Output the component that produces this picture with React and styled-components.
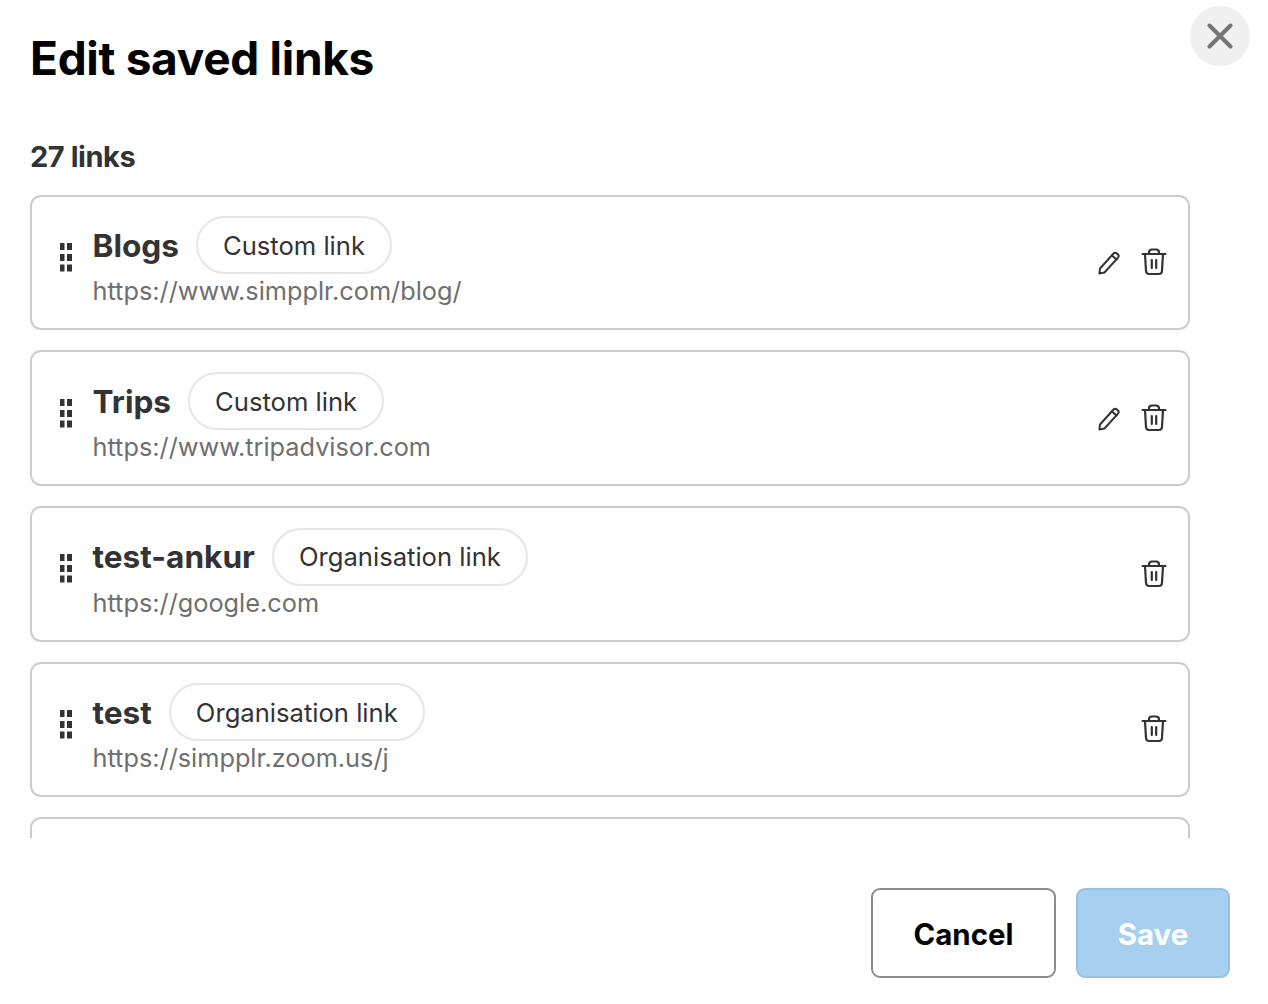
import React from "react";
import styled, { createGlobalStyle } from "styled-components";

const Global = createGlobalStyle`
  html, body { margin: 0; padding: 0; background: #fff; }
  * { box-sizing: border-box; }
  body { font-family: Inter, "Liberation Sans", sans-serif; }
`;

const Dialog = styled.div`
  position: relative;
  width: 1268px;
  height: 1004px;
  padding: 0 38px 0 30px;
  display: flex;
  flex-direction: column;
  overflow: hidden;
`;
const Title = styled.h1`
  margin: 28px 0 0;
  font-size: 46px;
  line-height: 60px;
  font-weight: 700;
  letter-spacing: -0.3px;
  color: #000;
`;
const CloseButton = styled.button`
  position: absolute;
  top: 6px;
  right: 18px;
  width: 60px;
  height: 60px;
  padding: 0;
  border: 0;
  border-radius: 50%;
  background: #f0f0f0;
  display: flex;
  align-items: center;
  justify-content: center;
`;
const Count = styled.div`
  margin-top: 47px;
  font-size: 29px;
  line-height: 44px;
  font-weight: 700;
  letter-spacing: -0.45px;
  color: #333;
`;
const List = styled.div`
  margin-top: 15.5px;
  height: 643.5px;
  width: 1160px;
  overflow: hidden;
  display: flex;
  flex-direction: column;
  gap: 20px;
`;
const Card = styled.div`
  flex: none;
  height: 135.7px;
  border: 2px solid #ccc;
  border-radius: 11px;
  background: #fff;
  padding: 0 21px 0 28px;
  display: flex;
  align-items: center;
`;
const Handle = styled.svg`
  flex: none;
  width: 12px;
  height: 29px;
  margin: 0 20.5px 10px 0;
`;
const Body = styled.div`
  flex: 1;
  min-width: 0;
  display: flex;
  flex-direction: column;
`;
const TitleRow = styled.div`
  display: flex;
  align-items: center;
  gap: 17px;
`;
const Name = styled.span`
  padding-top: 1px;
  font-size: 31.6px;
  line-height: 40px;
  font-weight: 700;
  color: #333;
`;
const Pill = styled.span`
  height: 58px;
  padding: 0 25px;
  border: 2px solid #e6e6e6;
  border-radius: 29px;
  display: flex;
  align-items: center;
  font-size: 25.6px;
  font-weight: 400;
  color: #333;
`;
const Url = styled.div`
  font-size: 25.3px;
  line-height: 34px;
  color: #6f6f6f;
`;
const Actions = styled.div`
  flex: none;
  display: flex;
  align-items: center;
  gap: 20px;
`;
const IconButton = styled.span`
  display: flex;
  width: ${(p) => p.$w}px;
  height: 28px;
  align-items: center;
  justify-content: center;
`;
const Footer = styled.div`
  margin-top: 50px;
  display: flex;
  justify-content: flex-end;
  gap: 20px;
`;
const Button = styled.button`
  height: 90px;
  width: ${(p) => p.$w}px;
  border-radius: 9px;
  border: 2px solid ${(p) => (p.$primary ? "#98c0e0" : "#8c8c8c")};
  background: ${(p) => (p.$primary ? "#a7cfef" : "#fff")};
  color: ${(p) => (p.$primary ? "#fff" : "#000")};
  font-family: inherit;
  font-size: 29.4px;
  font-weight: 700;
  padding: 2px 0 0;
`;

const DragIcon = () => (
  <Handle viewBox="0 0 12 29" fill="#333">
    {[0, 11, 21.5].map((y) => (
      <g key={y}>
        <rect x="0" y={y} width="4.5" height="7" />
        <rect x="7" y={y} width="5" height="7" />
      </g>
    ))}
  </Handle>
);

const Pencil = () => (
  <svg width="24" height="26" viewBox="0 0 24 26" fill="none" stroke="#333" strokeWidth="2" strokeLinejoin="round" strokeLinecap="round">
    <path d="M3 19.5 L16.5 4.5 Q18 3 19.8 4.4 L21 5.5 Q22.4 7 21 8.6 L7.5 23.5 L2.4 24.4 Z" />
    <path d="M15 6.5 L19.5 10.5" />
  </svg>
);

const Trash = () => (
  <svg width="26" height="28" viewBox="0 0 26 28" fill="none" stroke="#333" strokeWidth="2.2" strokeLinejoin="round" strokeLinecap="round">
    <path d="M1.5 6 H24.5" />
    <path d="M8 6 V4.5 Q8 1.5 11 1.5 H15 Q18 1.5 18 4.5 V6" />
    <path d="M4 6 L5 23 Q5.2 26 8.2 26 H17.8 Q20.8 26 21 23 L22 6" />
    <path d="M10.8 12 V20 M15.2 12 V20" />
  </svg>
);

const CloseIcon = () => (
  <svg width="26" height="26" viewBox="0 0 26 26" stroke="#757575" strokeWidth="4" strokeLinecap="round">
    <path d="M2.5 2.5 L23.5 23.5 M23.5 2.5 L2.5 23.5" />
  </svg>
);

const links = [
  { name: "Blogs", tag: "Custom link", url: "https://www.simpplr.com/blog/", edit: true },
  { name: "Trips", tag: "Custom link", url: "https://www.tripadvisor.com", edit: true },
  { name: "test-ankur", tag: "Organisation link", url: "https://google.com" },
  { name: "test", tag: "Organisation link", url: "https://simpplr.zoom.us/j" },
  { id: "clipped" },
];

export default function App() {
  return (
    <>
      <Global />
      <Dialog>
        <Title>Edit saved links</Title>
        <CloseButton aria-label="Close"><CloseIcon /></CloseButton>
        <Count>27 links</Count>
        <List>
          {links.map((l) => (
            <Card key={l.name || l.id}>
              {l.name && (
                <>
                  <DragIcon />
                  <Body>
                    <TitleRow>
                      <Name>{l.name}</Name>
                      <Pill>{l.tag}</Pill>
                    </TitleRow>
                    <Url>{l.url}</Url>
                  </Body>
                  <Actions>
                    {l.edit && <IconButton $w={24}><Pencil /></IconButton>}
                    <IconButton $w={26}><Trash /></IconButton>
                  </Actions>
                </>
              )}
            </Card>
          ))}
        </List>
        <Footer>
          <Button $w={185}>Cancel</Button>
          <Button $w={154} $primary>Save</Button>
        </Footer>
      </Dialog>
    </>
  );
}
